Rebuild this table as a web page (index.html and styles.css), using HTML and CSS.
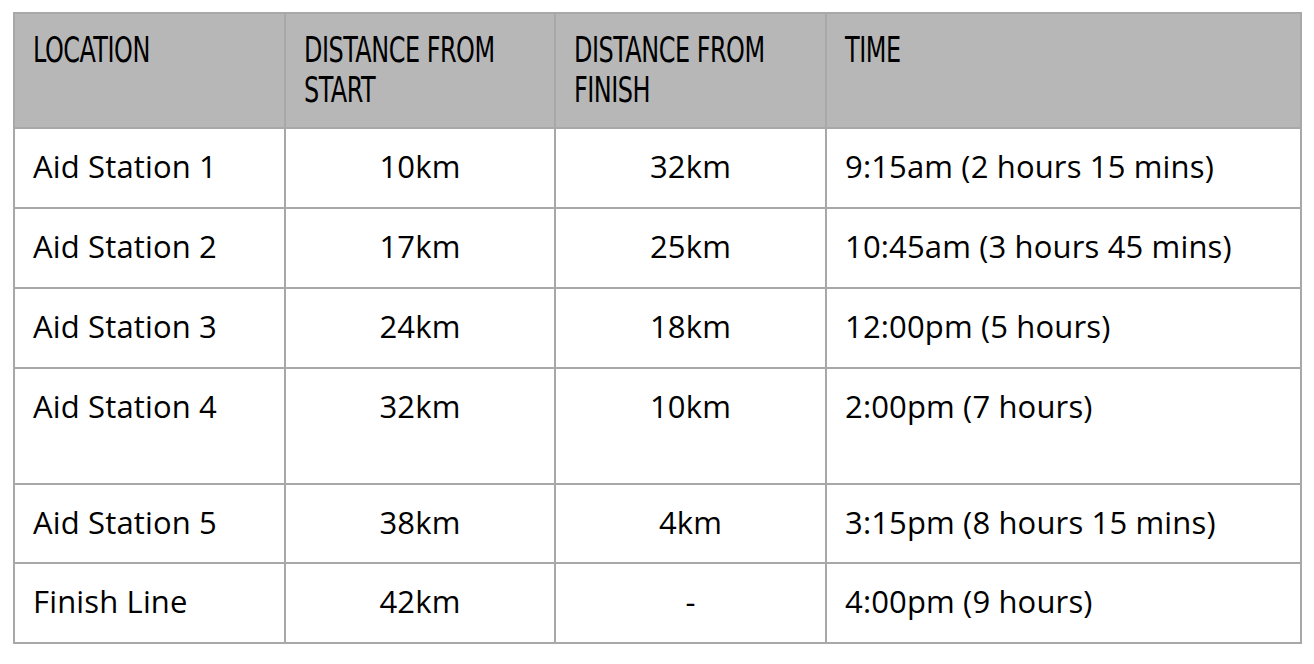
FILE: index.html
```html
<!DOCTYPE html>
<html>
<head>
<meta charset="utf-8">
<link rel="stylesheet" href="styles.css">
</head>
<body>
<table class="schedule">
  <colgroup>
    <col class="c1"><col class="c2"><col class="c3"><col class="c4">
  </colgroup>
  <thead>
    <tr>
      <th><span class="hd">LOCATION</span></th>
      <th><span class="hd">DISTANCE FROM<br>START</span></th>
      <th><span class="hd">DISTANCE FROM<br>FINISH</span></th>
      <th><span class="hd">TIME</span></th>
    </tr>
  </thead>
  <tbody>
    <tr><td>Aid Station 1</td><td class="num">10km</td><td class="num">32km</td><td>9:15am (2 hours 15 mins)</td></tr>
    <tr><td>Aid Station 2</td><td class="num">17km</td><td class="num">25km</td><td>10:45am (3 hours 45 mins)</td></tr>
    <tr><td>Aid Station 3</td><td class="num">24km</td><td class="num">18km</td><td>12:00pm (5 hours)</td></tr>
    <tr class="tall"><td>Aid Station 4</td><td class="num">32km</td><td class="num">10km</td><td>2:00pm (7 hours)</td></tr>
    <tr class="short"><td>Aid Station 5</td><td class="num">38km</td><td class="num">4km</td><td>3:15pm (8 hours 15 mins)</td></tr>
    <tr><td>Finish Line</td><td class="num">42km</td><td class="num">-</td><td>4:00pm (9 hours)</td></tr>
  </tbody>
</table>
</body>
</html>
```
FILE: styles.css
```css
html, body {
  margin: 0;
  padding: 0;
  background: #ffffff;
}
body {
  padding: 12px 0 0 13px;
}
.schedule {
  border-collapse: collapse;
  table-layout: fixed;
  width: 1287px;
  font-family: "Open Sans", "Liberation Sans", sans-serif;
  color: #000;
}
.c1 { width: 271px; }
.c2 { width: 270px; }
.c3 { width: 271px; }
.c4 { width: 475px; }
.schedule th,
.schedule td {
  border: 2px solid #a8a8a8;
  vertical-align: top;
  text-align: left;
  padding: 0 18px;
}
.schedule th {
  background: #b7b7b7;
  height: 115px;
  font-family: "Liberation Sans Narrow", "DejaVu Sans Condensed", sans-serif;
  font-weight: normal;
  font-size: 28px;
  line-height: 32px;
  padding-top: 17px;
  box-sizing: border-box;
}
.hd {
  display: inline-block;
  transform: scale(0.95, 1.25);
  transform-origin: 0 0;
  letter-spacing: -0.5px;
  white-space: nowrap;
}
.schedule td {
  height: 80px;
  box-sizing: border-box;
  font-size: 31px;
  line-height: 32px;
  letter-spacing: 0.15px;
  padding-top: 21px;
}
.schedule td.num {
  text-align: center;
}
.schedule tr.tall td {
  height: 116px;
}
.schedule tr.short td {
  height: 79px;
}
```
